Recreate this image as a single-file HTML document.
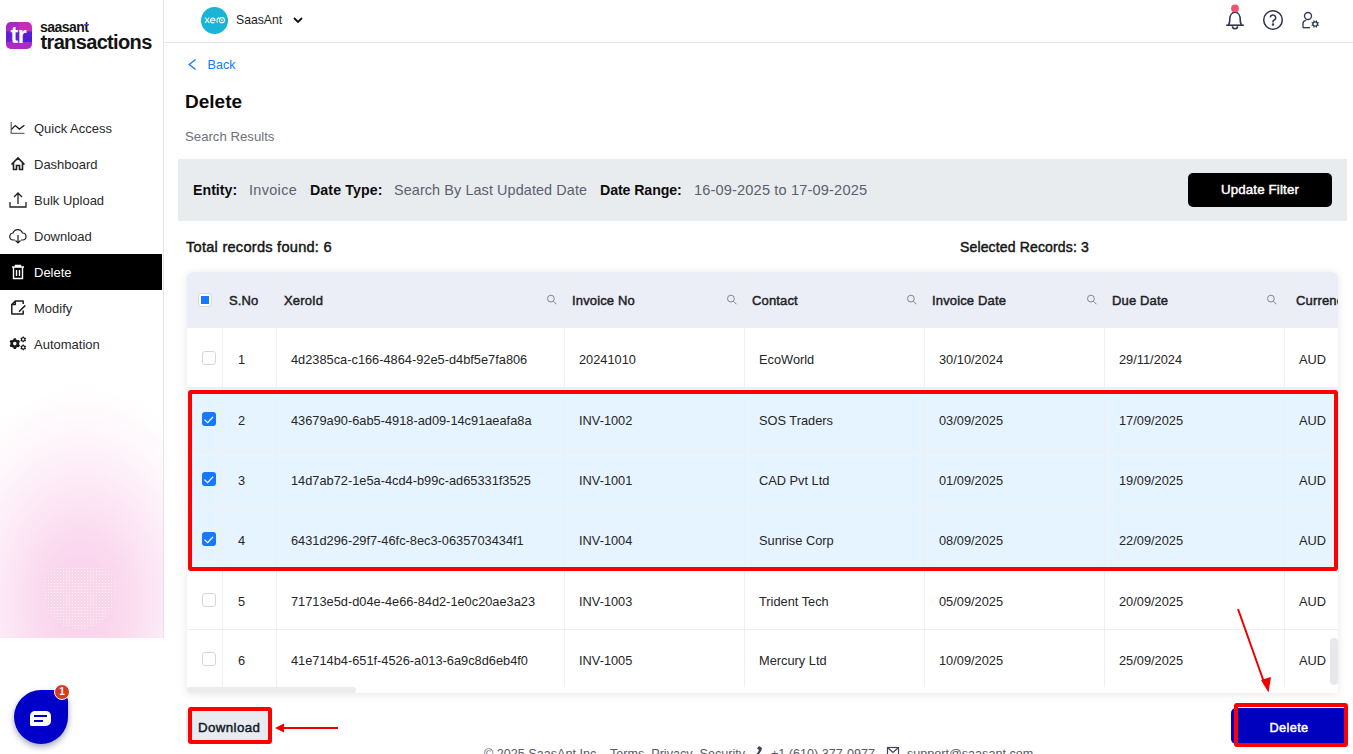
<!DOCTYPE html>
<html><head><meta charset="utf-8">
<style>
*{box-sizing:border-box;margin:0;padding:0}
html,body{width:1353px;height:754px;overflow:hidden;background:#fff;font-family:"Liberation Sans",sans-serif;color:#1f1f1f}
.abs{position:absolute}
#side{position:absolute;left:0;top:0;width:164px;height:638px;border-right:1px solid #e4e4e8;background:#fff;overflow:hidden}
#pink{position:absolute;left:0;top:362px;width:163px;height:276px;background:radial-gradient(ellipse 150px 215px at 82px 240px,#f9cfea 0%,#fad9ef 28%,#fce8f5 52%,#fef5fa 76%,#fff 100%)}
.mi{position:absolute;left:0;width:162px;height:36px}
.mi .t{position:absolute;left:34px;top:8.5px;font-size:13px;line-height:20px;color:#2a2a2a;white-space:nowrap}
.mi svg{position:absolute;left:9px;top:9px}
.mi.act{background:#000}
.mi.act .t{color:#fff}
#hdr{position:absolute;left:164px;top:0;width:1189px;height:43px;border-bottom:1px solid #e3e4ea}
</style></head><body>
<div id="side"><div id="pink"></div><div class="abs" style="left:44px;top:567px;width:71px;height:62px;border-radius:30% 30% 45% 45%/25% 25% 60% 60%;background:radial-gradient(circle,rgba(255,255,255,0.6) 0.7px,transparent 1px) 0 0/3px 3px,#f8d6ec"></div>
<div class="abs" style="left:6px;top:22px;width:26px;height:27px;border-radius:5px;overflow:hidden;background:linear-gradient(180deg,#c42db8 0%,#c42db8 34%,#5a1fd2 36%,#4a1dd6 72%,#b02cc2 74%,#a82cc4 100%)"><div style="position:absolute;left:0;top:0;width:13px;height:27px;background:linear-gradient(180deg,rgba(140,40,210,0.6),rgba(120,30,210,0.3) 50%,rgba(200,40,190,0.4))"></div></div>
<div class="abs" style="left:10.5px;top:20px;width:24px;font-size:23px;font-weight:bold;color:#fff;line-height:30px;letter-spacing:-0.4px">tr</div>
<div class="abs" style="left:40px;top:20px;font-size:14px;font-weight:bold;color:#151515;line-height:14px;letter-spacing:-0.55px">saasant</div>
<div class="abs" style="left:84px;top:23.5px;width:4px;height:1.5px;background:#7b3bf0"></div>
<div class="abs" style="left:40.5px;top:30.5px;font-size:20px;font-weight:bold;color:#151515;line-height:22px;letter-spacing:-0.65px">transactions</div>
<div class="mi" style="top:110px"><svg width="18" height="18" viewBox="0 0 18 18" fill="none" stroke="#333" stroke-width="1.3"><path d="M2.2 3V14.3H15.5" stroke="#6e6e6e"/><path d="M2.4 10.4L6.3 6.6L10.4 10.1L15.4 6.3" stroke="#1a1a1a"/></svg><div class="t">Quick Access</div></div>
<div class="mi" style="top:146px"><svg width="18" height="18" viewBox="0 0 18 18" fill="none" stroke="#222" stroke-width="1.6"><path d="M2.5 9.5L9 3l6.5 6.5M4.5 8v6.5h3v-4h3v4h3V8"/></svg><div class="t">Dashboard</div></div>
<div class="mi" style="top:182px"><svg width="18" height="18" viewBox="0 0 18 18" fill="none" stroke="#222" stroke-width="1.3"><path d="M9 13V2M5 6l4-4 4 4M1 11v5h16v-5"/></svg><div class="t">Bulk Upload</div></div>
<div class="mi" style="top:218px"><svg width="18" height="18" viewBox="0 0 18 18" fill="none" stroke="#222" stroke-width="1.2"><path d="M6 13H4.5A3.5 3.5 0 0 1 4 6a5 5 0 0 1 9.5 0A3.5 3.5 0 0 1 13.5 13H12"/><path d="M9 8v8M6.5 13.5L9 16l2.5-2.5"/></svg><div class="t">Download</div></div>
<div class="mi act" style="top:254px"><svg width="18" height="18" viewBox="0 0 18 18" fill="none" stroke="#fff" stroke-width="1.4"><path d="M3 4h12M6.5 4V2.5h5V4M4.5 4v11.5h9V4M7.5 7v6M10.5 7v6"/></svg><div class="t">Delete</div></div>
<div class="mi" style="top:290px"><svg width="18" height="18" viewBox="0 0 18 18" fill="none" stroke="#1e1e1e" stroke-width="1.5" stroke-linejoin="round"><path d="M6.3 2H14.2V5M14.2 11.5V14.9H2.8V5.5L6.3 2V5.5H2.8"/><path d="M15.9 6.9L10.4 12.2" stroke-linecap="round"/></svg><div class="t">Modify</div></div>
<div class="mi" style="top:326px"><svg width="18" height="18" viewBox="0 0 18 18"><path fill="#1a1a1a" fill-rule="evenodd" d="M4.40 4.43 L4.71 3.21 L6.89 3.21 L7.20 4.43 L8.71 5.30 L9.93 4.96 L11.01 6.85 L10.11 7.73 L10.11 9.47 L11.01 10.35 L9.93 12.24 L8.71 11.90 L7.20 12.77 L6.89 13.99 L4.71 13.99 L4.40 12.77 L2.89 11.90 L1.67 12.24 L0.59 10.35 L1.49 9.47 L1.49 7.73 L0.59 6.85 L1.67 4.96 L2.89 5.30Z M7.60 8.60 A1.8 1.8 0 1 0 4.00 8.60 A1.8 1.8 0 1 0 7.60 8.60Z M13.47 2.22 L13.61 1.46 L14.79 1.46 L14.93 2.22 L15.72 2.67 L16.45 2.42 L17.04 3.44 L16.45 3.95 L16.45 4.85 L17.04 5.36 L16.45 6.38 L15.72 6.13 L14.93 6.58 L14.79 7.34 L13.61 7.34 L13.47 6.58 L12.68 6.13 L11.95 6.38 L11.36 5.36 L11.95 4.85 L11.95 3.95 L11.36 3.44 L11.95 2.42 L12.68 2.67Z M15.30 4.40 A1.1 1.1 0 1 0 13.10 4.40 A1.1 1.1 0 1 0 15.30 4.40Z M13.47 10.22 L13.61 9.46 L14.79 9.46 L14.93 10.22 L15.72 10.67 L16.45 10.42 L17.04 11.44 L16.45 11.95 L16.45 12.85 L17.04 13.36 L16.45 14.38 L15.72 14.13 L14.93 14.58 L14.79 15.34 L13.61 15.34 L13.47 14.58 L12.68 14.13 L11.95 14.38 L11.36 13.36 L11.95 12.85 L11.95 11.95 L11.36 11.44 L11.95 10.42 L12.68 10.67Z M15.30 12.40 A1.1 1.1 0 1 0 13.10 12.40 A1.1 1.1 0 1 0 15.30 12.40Z"/></svg><div class="t">Automation</div></div>
</div>
<div id="hdr">
<svg class="abs" style="left:37px;top:7px" width="27" height="27" viewBox="0 0 27 27"><circle cx="13.5" cy="13.5" r="13.5" fill="#1ab4d7"/><g transform="translate(12.5 13.2) scale(0.92) translate(-13.5 -13.5)"><g fill="none" stroke="#fff" stroke-width="1.1"><path d="M4.3 10.6L9 16.4M9 10.6L4.3 16.4"/><path d="M10.2 13.6h5.1a2.6 2.6 0 1 0-0.6 1.9"/><path d="M17.4 16.4v-3.2c0-1.5 0.8-2.4 2.2-2.4"/><circle cx="22.6" cy="13.5" r="2.8"/></g><circle cx="22.6" cy="13.5" r="0.9" fill="#fff"/></g></svg>
<div class="abs" style="left:72px;top:12px;font-size:12.2px;line-height:16px;color:#1e1e1e">SaasAnt</div>
<svg class="abs" style="left:128px;top:14px" width="12" height="12" viewBox="0 0 12 12" fill="none" stroke="#111" stroke-width="1.8"><path d="M2 4l4 4 4-4"/></svg>
</div>
<svg class="abs" style="left:1224px;top:4px" width="24" height="28" viewBox="0 0 24 28" fill="none" stroke="#2f3450" stroke-width="1.6" stroke-linejoin="round"><path d="M2.2 21.2h17.6"/><path d="M4.6 21.2C5.6 19 5.8 17.5 5.8 15.5C5.8 11.5 7.8 8.3 11 8.3C14.2 8.3 16.2 11.5 16.2 15.5C16.2 17.5 16.4 19 17.4 21.2"/><path d="M8.5 22.2a2.5 2.5 0 0 0 5 0"/><circle cx="11" cy="4.4" r="3.9" fill="#f25274" stroke="none"/></svg>
<svg class="abs" style="left:1262px;top:9px" width="22" height="22" viewBox="0 0 22 22" fill="none" stroke="#2f3450" stroke-width="1.5"><circle cx="11" cy="11" r="9.3"/><path d="M8.3 8.6a2.7 2.7 0 1 1 3.6 2.6c-0.6 0.3-0.9 0.7-0.9 1.4v0.8"/><circle cx="11" cy="15.6" r="0.5" fill="#2f3450"/></svg>
<svg class="abs" style="left:1300px;top:10px" width="22" height="20" viewBox="0 0 22 20" fill="none" stroke="#34395a" stroke-width="1.35"><circle cx="8" cy="6" r="3.5"/><path d="M3 17.7v-4.2c0-1.8 1.3-3 3.2-3.2"/><path d="M3 17.7h7"/><path d="M18.07 14.43 L18.98 14.97 L18.56 15.99 L17.53 15.72 L16.92 16.33 L17.19 17.36 L16.17 17.78 L15.63 16.87 L14.77 16.87 L14.23 17.78 L13.21 17.36 L13.48 16.33 L12.87 15.72 L11.84 15.99 L11.42 14.97 L12.33 14.43 L12.33 13.57 L11.42 13.03 L11.84 12.01 L12.87 12.28 L13.48 11.67 L13.21 10.64 L14.23 10.22 L14.77 11.13 L15.63 11.13 L16.17 10.22 L17.19 10.64 L16.92 11.67 L17.53 12.28 L18.56 12.01 L18.98 13.03 L18.07 13.57Z M16.80 14.00 A1.6 1.6 0 1 0 13.60 14.00 A1.6 1.6 0 1 0 16.80 14.00Z" fill="#34395a" fill-rule="evenodd" stroke="none"/></svg>
<svg class="abs" style="left:186px;top:57px" width="12" height="14" viewBox="0 0 12 14" fill="none" stroke="#1677ff" stroke-width="1.3"><path d="M9.6 2.6L3.2 7.5l6.4 4.9"/></svg>
<div class="abs" style="left:207.5px;top:55px;font-size:12.6px;line-height:20px;color:#1677ff;white-space:nowrap;">Back</div>
<div class="abs" style="left:185px;top:92px;font-size:19px;font-weight:bold;line-height:20px;color:#0b0b0b;white-space:nowrap;">Delete</div>
<div class="abs" style="left:185px;top:127px;font-size:13.2px;line-height:20px;color:#6f7178;white-space:nowrap;">Search Results</div>
<div class="abs" style="left:178px;top:159px;width:1169px;height:62px;background:#e9ecef"></div>
<div class="abs" style="left:193px;top:180px;font-size:14.2px;font-weight:bold;line-height:20px;color:#0d0d0d;white-space:nowrap;">Entity:</div>
<div class="abs" style="left:249px;top:180px;font-size:14.4px;line-height:20px;color:#5b606e;white-space:nowrap;letter-spacing:0.35px">Invoice</div>
<div class="abs" style="left:310px;top:180px;font-size:14.2px;font-weight:bold;line-height:20px;color:#0d0d0d;white-space:nowrap;letter-spacing:0.1px">Date Type:</div>
<div class="abs" style="left:394px;top:180px;font-size:14.4px;line-height:20px;color:#5b606e;white-space:nowrap;letter-spacing:0.1px">Search By Last Updated Date</div>
<div class="abs" style="left:600px;top:180px;font-size:14.2px;font-weight:bold;line-height:20px;color:#0d0d0d;white-space:nowrap;letter-spacing:-0.1px">Date Range:</div>
<div class="abs" style="left:694px;top:180px;font-size:14.6px;line-height:20px;color:#5b606e;white-space:nowrap;letter-spacing:0.15px">16-09-2025 to 17-09-2025</div>
<div class="abs" style="left:1188px;top:173px;width:144px;height:34px;border-radius:5px;background:#000;color:#fff;font-size:13.3px;-webkit-text-stroke:0.45px currentColor;letter-spacing:0.15px;line-height:34px;text-align:center">Update Filter</div>
<div class="abs" style="left:186px;top:237px;font-size:14.6px;line-height:20px;color:#161616;white-space:nowrap;-webkit-text-stroke:0.45px currentColor;letter-spacing:0.25px">Total records found: 6</div>
<div class="abs" style="left:960px;top:237px;font-size:14.0px;line-height:20px;color:#161616;white-space:nowrap;-webkit-text-stroke:0.45px currentColor;letter-spacing:0.15px">Selected Records: 3</div>
<div class="abs" style="left:187px;top:272px;width:1151px;height:421px;border-radius:6px 6px 0 0;box-shadow:0 1px 8px rgba(0,0,0,0.10);background:#fff;overflow:hidden">
<div class="abs" style="left:0;top:0;width:1151px;height:55px;background:#eceef7"></div>
<div class="abs" style="left:0;top:55px;width:1151px;height:1px;background:#efeff1"></div>
<div class="abs" style="left:0;top:115px;width:1151px;height:1px;background:#efeff1"></div>
<div class="abs" style="left:0;top:176px;width:1151px;height:1px;background:#efeff1"></div>
<div class="abs" style="left:0;top:236px;width:1151px;height:1px;background:#efeff1"></div>
<div class="abs" style="left:0;top:297px;width:1151px;height:1px;background:#efeff1"></div>
<div class="abs" style="left:0;top:357px;width:1151px;height:1px;background:#efeff1"></div>
<div class="abs" style="left:0;top:116px;width:1151px;height:180px;background:#e6f4ff"></div>
<div class="abs" style="left:0;top:176px;width:1151px;height:1px;background:#eeeff0"></div>
<div class="abs" style="left:0;top:236px;width:1151px;height:1px;background:#eeeff0"></div>
<div class="abs" style="left:35px;top:0;width:1px;height:415px;background:#efeff1"></div>
<div class="abs" style="left:89px;top:0;width:1px;height:415px;background:#efeff1"></div>
<div class="abs" style="left:377px;top:0;width:1px;height:415px;background:#efeff1"></div>
<div class="abs" style="left:557px;top:0;width:1px;height:415px;background:#efeff1"></div>
<div class="abs" style="left:737px;top:0;width:1px;height:415px;background:#efeff1"></div>
<div class="abs" style="left:917px;top:0;width:1px;height:415px;background:#efeff1"></div>
<div class="abs" style="left:1097px;top:0;width:1px;height:415px;background:#efeff1"></div>
<div class="abs" style="left:42px;top:19px;font-size:13px;line-height:20px;color:#202124;white-space:nowrap;-webkit-text-stroke:0.45px currentColor;letter-spacing:0.15px">S.No</div>
<div class="abs" style="left:97px;top:19px;font-size:13px;line-height:20px;color:#202124;white-space:nowrap;-webkit-text-stroke:0.45px currentColor;letter-spacing:0.15px">XeroId</div>
<div class="abs" style="left:385px;top:19px;font-size:13px;line-height:20px;color:#202124;white-space:nowrap;-webkit-text-stroke:0.45px currentColor;letter-spacing:0.15px">Invoice No</div>
<div class="abs" style="left:565px;top:19px;font-size:13px;line-height:20px;color:#202124;white-space:nowrap;-webkit-text-stroke:0.45px currentColor;letter-spacing:0.15px">Contact</div>
<div class="abs" style="left:745px;top:19px;font-size:13px;line-height:20px;color:#202124;white-space:nowrap;-webkit-text-stroke:0.45px currentColor;letter-spacing:0.15px">Invoice Date</div>
<div class="abs" style="left:925px;top:19px;font-size:13px;line-height:20px;color:#202124;white-space:nowrap;-webkit-text-stroke:0.45px currentColor;letter-spacing:0.15px">Due Date</div>
<div class="abs" style="left:1109px;top:19px;font-size:13px;line-height:20px;color:#202124;white-space:nowrap;-webkit-text-stroke:0.45px currentColor;letter-spacing:0.15px">Currency</div>
<svg class="abs" style="left:359px;top:22px" width="12" height="12" viewBox="0 0 12 12" fill="none" stroke="#80858f" stroke-width="1.0"><circle cx="4.9" cy="4.6" r="3.4"/><path d="M7.4 7.2L10.4 10.2"/></svg>
<svg class="abs" style="left:539px;top:22px" width="12" height="12" viewBox="0 0 12 12" fill="none" stroke="#80858f" stroke-width="1.0"><circle cx="4.9" cy="4.6" r="3.4"/><path d="M7.4 7.2L10.4 10.2"/></svg>
<svg class="abs" style="left:719px;top:22px" width="12" height="12" viewBox="0 0 12 12" fill="none" stroke="#80858f" stroke-width="1.0"><circle cx="4.9" cy="4.6" r="3.4"/><path d="M7.4 7.2L10.4 10.2"/></svg>
<svg class="abs" style="left:899px;top:22px" width="12" height="12" viewBox="0 0 12 12" fill="none" stroke="#80858f" stroke-width="1.0"><circle cx="4.9" cy="4.6" r="3.4"/><path d="M7.4 7.2L10.4 10.2"/></svg>
<svg class="abs" style="left:1079px;top:22px" width="12" height="12" viewBox="0 0 12 12" fill="none" stroke="#80858f" stroke-width="1.0"><circle cx="4.9" cy="4.6" r="3.4"/><path d="M7.4 7.2L10.4 10.2"/></svg>
<div class="abs" style="left:11px;top:21px;width:14px;height:14px;border:1px solid #d9d9d9;border-radius:3px;background:#fff"></div>
<div class="abs" style="left:14px;top:24px;width:8px;height:8px;background:#1677ff"></div>
<div class="abs" style="left:15px;top:79px;width:14px;height:14px;border:1px solid #d6d6de;border-radius:3px;background:#fff"></div>
<div class="abs" style="left:51px;top:78px;font-size:12.8px;line-height:20px;color:#262626;white-space:nowrap;">1</div>
<div class="abs" style="left:104px;top:78px;font-size:12.8px;line-height:20px;color:#262626;white-space:nowrap;">4d2385ca-c166-4864-92e5-d4bf5e7fa806</div>
<div class="abs" style="left:392px;top:78px;font-size:12.8px;line-height:20px;color:#262626;white-space:nowrap;">20241010</div>
<div class="abs" style="left:572px;top:78px;font-size:12.8px;line-height:20px;color:#262626;white-space:nowrap;">EcoWorld</div>
<div class="abs" style="left:752px;top:78px;font-size:12.8px;line-height:20px;color:#262626;white-space:nowrap;">30/10/2024</div>
<div class="abs" style="left:932px;top:78px;font-size:12.8px;line-height:20px;color:#262626;white-space:nowrap;">29/11/2024</div>
<div class="abs" style="left:1112px;top:78px;font-size:12.8px;line-height:20px;color:#262626;white-space:nowrap;">AUD</div>
<div class="abs" style="left:15px;top:140px;width:14px;height:14px;border-radius:3px;background:#1677ff"></div>
<svg class="abs" style="left:15px;top:140px" width="14" height="14" viewBox="0 0 14 14" fill="none" stroke="#fff" stroke-width="1.25"><path d="M2.4 7.6L5.6 10.6L11.1 4.7"/></svg>
<div class="abs" style="left:51px;top:139px;font-size:12.8px;line-height:20px;color:#262626;white-space:nowrap;">2</div>
<div class="abs" style="left:104px;top:139px;font-size:12.8px;line-height:20px;color:#262626;white-space:nowrap;">43679a90-6ab5-4918-ad09-14c91aeafa8a</div>
<div class="abs" style="left:392px;top:139px;font-size:12.8px;line-height:20px;color:#262626;white-space:nowrap;">INV-1002</div>
<div class="abs" style="left:572px;top:139px;font-size:12.8px;line-height:20px;color:#262626;white-space:nowrap;">SOS Traders</div>
<div class="abs" style="left:752px;top:139px;font-size:12.8px;line-height:20px;color:#262626;white-space:nowrap;">03/09/2025</div>
<div class="abs" style="left:932px;top:139px;font-size:12.8px;line-height:20px;color:#262626;white-space:nowrap;">17/09/2025</div>
<div class="abs" style="left:1112px;top:139px;font-size:12.8px;line-height:20px;color:#262626;white-space:nowrap;">AUD</div>
<div class="abs" style="left:15px;top:200px;width:14px;height:14px;border-radius:3px;background:#1677ff"></div>
<svg class="abs" style="left:15px;top:200px" width="14" height="14" viewBox="0 0 14 14" fill="none" stroke="#fff" stroke-width="1.25"><path d="M2.4 7.6L5.6 10.6L11.1 4.7"/></svg>
<div class="abs" style="left:51px;top:199px;font-size:12.8px;line-height:20px;color:#262626;white-space:nowrap;">3</div>
<div class="abs" style="left:104px;top:199px;font-size:12.8px;line-height:20px;color:#262626;white-space:nowrap;">14d7ab72-1e5a-4cd4-b99c-ad65331f3525</div>
<div class="abs" style="left:392px;top:199px;font-size:12.8px;line-height:20px;color:#262626;white-space:nowrap;">INV-1001</div>
<div class="abs" style="left:572px;top:199px;font-size:12.8px;line-height:20px;color:#262626;white-space:nowrap;">CAD Pvt Ltd</div>
<div class="abs" style="left:752px;top:199px;font-size:12.8px;line-height:20px;color:#262626;white-space:nowrap;">01/09/2025</div>
<div class="abs" style="left:932px;top:199px;font-size:12.8px;line-height:20px;color:#262626;white-space:nowrap;">19/09/2025</div>
<div class="abs" style="left:1112px;top:199px;font-size:12.8px;line-height:20px;color:#262626;white-space:nowrap;">AUD</div>
<div class="abs" style="left:15px;top:260px;width:14px;height:14px;border-radius:3px;background:#1677ff"></div>
<svg class="abs" style="left:15px;top:260px" width="14" height="14" viewBox="0 0 14 14" fill="none" stroke="#fff" stroke-width="1.25"><path d="M2.4 7.6L5.6 10.6L11.1 4.7"/></svg>
<div class="abs" style="left:51px;top:259px;font-size:12.8px;line-height:20px;color:#262626;white-space:nowrap;">4</div>
<div class="abs" style="left:104px;top:259px;font-size:12.8px;line-height:20px;color:#262626;white-space:nowrap;">6431d296-29f7-46fc-8ec3-0635703434f1</div>
<div class="abs" style="left:392px;top:259px;font-size:12.8px;line-height:20px;color:#262626;white-space:nowrap;">INV-1004</div>
<div class="abs" style="left:572px;top:259px;font-size:12.8px;line-height:20px;color:#262626;white-space:nowrap;">Sunrise Corp</div>
<div class="abs" style="left:752px;top:259px;font-size:12.8px;line-height:20px;color:#262626;white-space:nowrap;">08/09/2025</div>
<div class="abs" style="left:932px;top:259px;font-size:12.8px;line-height:20px;color:#262626;white-space:nowrap;">22/09/2025</div>
<div class="abs" style="left:1112px;top:259px;font-size:12.8px;line-height:20px;color:#262626;white-space:nowrap;">AUD</div>
<div class="abs" style="left:15px;top:321px;width:14px;height:14px;border:1px solid #d6d6de;border-radius:3px;background:#fff"></div>
<div class="abs" style="left:51px;top:320px;font-size:12.8px;line-height:20px;color:#262626;white-space:nowrap;">5</div>
<div class="abs" style="left:104px;top:320px;font-size:12.8px;line-height:20px;color:#262626;white-space:nowrap;">71713e5d-d04e-4e66-84d2-1e0c20ae3a23</div>
<div class="abs" style="left:392px;top:320px;font-size:12.8px;line-height:20px;color:#262626;white-space:nowrap;">INV-1003</div>
<div class="abs" style="left:572px;top:320px;font-size:12.8px;line-height:20px;color:#262626;white-space:nowrap;">Trident Tech</div>
<div class="abs" style="left:752px;top:320px;font-size:12.8px;line-height:20px;color:#262626;white-space:nowrap;">05/09/2025</div>
<div class="abs" style="left:932px;top:320px;font-size:12.8px;line-height:20px;color:#262626;white-space:nowrap;">20/09/2025</div>
<div class="abs" style="left:1112px;top:320px;font-size:12.8px;line-height:20px;color:#262626;white-space:nowrap;">AUD</div>
<div class="abs" style="left:15px;top:380px;width:14px;height:14px;border:1px solid #d6d6de;border-radius:3px;background:#fff"></div>
<div class="abs" style="left:51px;top:379px;font-size:12.8px;line-height:20px;color:#262626;white-space:nowrap;">6</div>
<div class="abs" style="left:104px;top:379px;font-size:12.8px;line-height:20px;color:#262626;white-space:nowrap;">41e714b4-651f-4526-a013-6a9c8d6eb4f0</div>
<div class="abs" style="left:392px;top:379px;font-size:12.8px;line-height:20px;color:#262626;white-space:nowrap;">INV-1005</div>
<div class="abs" style="left:572px;top:379px;font-size:12.8px;line-height:20px;color:#262626;white-space:nowrap;">Mercury Ltd</div>
<div class="abs" style="left:752px;top:379px;font-size:12.8px;line-height:20px;color:#262626;white-space:nowrap;">10/09/2025</div>
<div class="abs" style="left:932px;top:379px;font-size:12.8px;line-height:20px;color:#262626;white-space:nowrap;">25/09/2025</div>
<div class="abs" style="left:1112px;top:379px;font-size:12.8px;line-height:20px;color:#262626;white-space:nowrap;">AUD</div>
<div class="abs" style="left:0;top:415px;width:1151px;height:6px;background:#fff"></div>
<div class="abs" style="left:0;top:415px;width:169px;height:6px;border-radius:3px;background:#ececec"></div>
<div class="abs" style="left:1143px;top:366px;width:8px;height:47px;border-radius:4px;background:#e8e8ec"></div>
</div>
<div class="abs" style="left:188px;top:390px;width:1150px;height:181px;border:4px solid #ff0000;border-radius:3px"></div>
<div class="abs" style="left:186px;top:708px;width:84px;height:35px;border-radius:4px;background:#e8ebf0"></div>
<div class="abs" style="left:188px;top:707px;width:84px;height:37px;border:4px solid #ff0000;border-radius:3px"></div>
<div class="abs" style="left:198px;top:718px;font-size:13.3px;line-height:20px;color:#111827;white-space:nowrap;-webkit-text-stroke:0.45px currentColor;letter-spacing:0.4px">Download</div>
<svg class="abs" style="left:270px;top:718px" width="72" height="20" viewBox="0 0 72 20"><path d="M12 10H68" stroke="#ee0000" stroke-width="2"/><path d="M5 10L14 5.5V14.5Z" fill="#ee0000"/></svg>
<div class="abs" style="left:1231px;top:708px;width:116px;height:36px;border-radius:5px;background:#0000bf"></div>
<div class="abs" style="left:1234px;top:703px;width:114px;height:44px;border:4px solid #ff0000;border-radius:3px"></div>
<div class="abs" style="left:1238px;top:707px;width:106px;height:1px;background:#fff"></div>
<div class="abs" style="left:1231px;top:718px;width:116px;text-align:center;font-size:12.8px;-webkit-text-stroke:0.45px currentColor;letter-spacing:0.35px;line-height:20px;color:#fff">Delete</div>
<svg class="abs" style="left:1230px;top:600px" width="50" height="100" viewBox="0 0 50 100"><path d="M8 9L35 85" stroke="#ee0000" stroke-width="2"/><path d="M38.5 92.5L31 80L41 77Z" fill="#ee0000"/></svg>
<div class="abs" style="left:484px;top:744px;font-size:12.6px;line-height:20px;color:#555a66;white-space:nowrap;">&copy; 2025 SaasAnt Inc.&nbsp;&nbsp; Terms&nbsp; Privacy&nbsp; Security</div>
<svg class="abs" style="left:750px;top:746px" width="14" height="12" viewBox="0 0 14 12"><path d="M3 10c2-0.5 5-3 6-6l-2-1.5 2-2.5 3 2c-0.5 4-4 8-8.5 9.5L1.5 9z" fill="#404557"/></svg>
<div class="abs" style="left:771px;top:744px;font-size:12.6px;line-height:20px;color:#555a66;white-space:nowrap;">+1 (610) 377-0977</div>
<svg class="abs" style="left:886px;top:746px" width="14" height="12" viewBox="0 0 14 12" fill="none" stroke="#404557" stroke-width="1.2"><rect x="1.5" y="1.5" width="11" height="9"/><path d="M1.5 1.5l5.5 5 5.5-5"/></svg>
<div class="abs" style="left:907px;top:744px;font-size:12.6px;line-height:20px;color:#555a66;white-space:nowrap;">support@saasant.com</div>
<div class="abs" style="left:14px;top:690px;width:54px;height:54px;border-radius:50%;border-top-right-radius:12px;background:#0000c8;box-shadow:0 3px 6px rgba(0,0,60,0.35)"></div>
<div class="abs" style="left:30px;top:711px;width:21px;height:15px;border-radius:5px 5px 5px 1.5px;background:#fff"></div>
<div class="abs" style="left:34px;top:715px;width:13px;height:1.6px;background:#0000c8"></div>
<div class="abs" style="left:34px;top:720px;width:9px;height:1.6px;background:#0000c8"></div>
<div class="abs" style="left:54px;top:684px;width:16px;height:16px;border-radius:50%;background:#d93a1a;border:1.5px solid #fff;color:#fff;font-size:10px;font-weight:bold;line-height:13px;text-align:center">1</div>
</body></html>
